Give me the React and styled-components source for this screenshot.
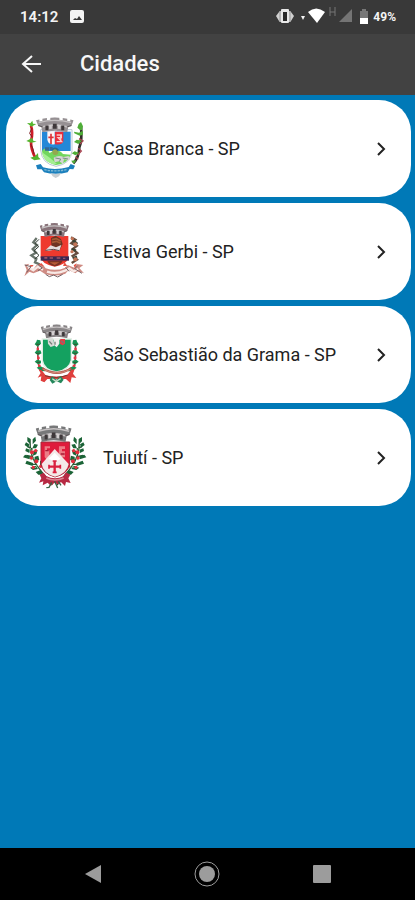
import React from "react";
import styled, { createGlobalStyle } from "styled-components";

const GlobalStyle = createGlobalStyle`
  *, *::before, *::after { box-sizing: border-box; }
  body {
    margin: 0;
    background: #0079b7;
    font-family: Roboto, "Liberation Sans", sans-serif;
  }
`;

const Screen = styled.div`
  display: flex;
  flex-direction: column;
  min-height: 100vh;
  background: #0079b7;
`;

const StatusBar = styled.div`
  display: flex;
  align-items: center;
  justify-content: space-between;
  height: 34px;
  padding: 0 19px 0 20px;
  background: #393939;
  color: #f4f4f4;
`;

const StatusGroup = styled.div`
  display: flex;
  align-items: center;
  gap: ${(p) => p.$gap}px;
`;

const Clock = styled.time`
  font-size: 15px;
  line-height: 20px;
  font-weight: 600;
`;

const BatteryLevel = styled.span`
  font-size: 12px;
  line-height: 20px;
  font-weight: 700;
`;

const AppBar = styled.header`
  display: flex;
  align-items: center;
  gap: 36px;
  height: 61px;
  padding: 0 18px 2px;
  background: #424242;
  color: #f7f7f7;
`;

const IconButton = styled.button`
  display: flex;
  padding: 0;
  border: 0;
  background: none;
  color: inherit;
  cursor: pointer;
`;

const Title = styled.h1`
  margin: 0;
  font-size: 22px;
  line-height: 28px;
  font-weight: 500;
`;

const CityList = styled.ul`
  flex: 1;
  display: flex;
  flex-direction: column;
  gap: 6px;
  margin: 0;
  padding: 5px 4px 5px 6px;
  list-style: none;
`;

const CityCard = styled.button`
  display: flex;
  align-items: center;
  gap: 8px;
  width: 100%;
  min-height: 97px;
  padding: 8px 17px 8px 9px;
  border: 0;
  border-radius: 32px;
  background: #fff;
  color: #222;
  font: inherit;
  text-align: left;
  cursor: pointer;
`;

const CityName = styled.span`
  flex: 1;
  font-size: 18px;
  line-height: 24px;
`;

const CrestArt = styled.svg`
  flex: none;
  width: 80px;
  height: 80px;
`;

const NavBar = styled.nav`
  display: grid;
  grid-template-columns: repeat(3, 1fr);
  justify-items: center;
  align-items: center;
  height: 52px;
  padding: 0 36px;
  background: #000;
  color: #9c9c9c;
`;

function MuralCrown({ x, y, width, height, color = "#8c8789" }) {
  return (
    <svg x={x} y={y} width={width} height={height} viewBox="0 0 100 42" preserveAspectRatio="none">
      <path
        d="M0 8 9 6V12L17 10V4L29 2V8L38 7V1L50 0 62 1V7L71 8V2L83 4V10L91 12V6L100 8 94 24 86 26 83 42Q50 33 17 42L14 26 6 24Z"
        fill={color}
      />
      <path d="M7 15Q50 2 93 15M15 27Q50 16 85 27" fill="none" stroke="#c5c1c2" strokeWidth="4" />
      <path d="M25 23h8v13h-8zM45 18h10v14H45zM67 23h8v13h-8z" fill="#3e383a" />
      <path d="M35 22l7-2v12l-7 1zM58 20l7 2v11l-7-1z" fill="#d4d0d1" />
      <path d="M6 23 18 27M94 23 82 27" stroke="#5b5557" strokeWidth="3" />
    </svg>
  );
}

function CasaBrancaCrest() {
  return (
    <CrestArt viewBox="0 0 240 240" aria-hidden="true">
      <path d="M48 50Q55 72 48 96 47 122 63 150" fill="none" stroke="#cf1c27" strokeWidth="8" />
      <path d="M50 58 44 73 51 84M47 105 54 120 57 135" fill="none" stroke="#7b2025" strokeWidth="3" />
      <path d="M49 53 36 42 46 43 52 35 54 44 64 45ZM48 101 34 96 44 91 51 86 55 95 65 98ZM58 154 46 146 60 142 69 132 70 144 77 151Z" fill="#55b52f" />
      <path d="M198 52Q202 94 193 115 192 145 175 163" fill="none" stroke="#302d28" strokeWidth="8" />
      <path d="M192 89l12 7-9 9M190 118l9 8-11 12M181 143l9 8" fill="none" stroke="#a84754" strokeWidth="4" />
      <path d="M196 64 187 56 191 45 198 39 204 52 201 63ZM194 80 178 73 177 68 192 71 203 65 204 77ZM190 105 177 99 185 92 201 95ZM181 139 170 133 179 127 193 132ZM177 164 168 155 184 154Z" fill="#4fae38" />
      <path d="M77 62H171V125Q168 165 123 172 80 164 77 123Z" fill="#fff" stroke="#b8c7d5" strokeWidth="3" />
      <path d="M81 68H167V126H81Z" fill="#2388d8" />
      <path d="M81 126Q91 108 104 132 126 114 144 135L167 137Q158 164 123 168 84 160 81 126Z" fill="#72d65e" />
      <path d="M81 130Q103 144 126 165L112 165Q84 155 81 130Z" fill="#a5ee92" />
      <path d="M90 115H102V125H90ZM104 114h9v10h-9z" fill="#356894" />
      <circle cx="121" cy="129" r="9" fill="#92a850" />
      <path d="M111 123Q120 113 130 124" fill="none" stroke="#2b668a" strokeWidth="5" />
      <path d="M97 67H119V106Q98 109 97 91Z" fill="#fff4f4" />
      <path d="M108 74v31M100 85h16" stroke="#dc3339" strokeWidth="5" />
      <path d="M120 68H145V97Q141 109 120 106Z" fill="#e82d3b" />
      <path d="M125 78h14v8h-10l11 12h-15M137 78v16" fill="none" stroke="#ffc8c6" strokeWidth="4" />
      <path d="M116 146Q130 137 146 144L161 141 165 154 147 151 144 164 132 157 119 160Z" fill="#d4d5d3" />
      <path d="M121 147 137 150 133 158M143 147 159 150" fill="none" stroke="#7b8c87" strokeWidth="3" />
      <MuralCrown x={63} y={25} width={113} height={45} color="#969093" />
      <path d="M63 169 77 165 84 175Q121 185 161 174L167 165 180 170 175 181 164 180 158 190Q122 199 87 190L80 181 67 181Z" fill="#1c80bd" />
      <path d="M88 182Q122 190 157 181" fill="none" stroke="#81b9d4" strokeWidth="4" strokeDasharray="7 3" />
      <path d="M107 193Q122 197 138 193L132 202 122 207 113 202Z" fill="#c8ced2" />
    </CrestArt>
  );
}

function EstivaGerbiCrest() {
  return (
    <CrestArt viewBox="0 0 240 240" aria-hidden="true">
      <g fill="none" strokeWidth="7">
        <path d="M65 78 55 91 66 99 53 111 63 122 49 130 64 141 60 151 74 157" stroke="#69746b" />
        <path d="M72 82 60 94 71 104 57 116 72 130 59 142" stroke="#343e35" strokeWidth="3" />
        <path d="M168 76 181 83 169 94 185 102 173 111 187 123 173 132 186 143 170 153" stroke="#674d3e" />
        <path d="M173 84 187 96M170 111 183 116M173 139 186 134" stroke="#374334" />
      </g>
      <g fill="#c37557">
        <circle cx="172" cy="80" r="5" /><circle cx="181" cy="97" r="6" /><circle cx="171" cy="119" r="5" /><circle cx="181" cy="142" r="6" />
      </g>
      <path d="M77 72H160V137Q156 157 119 164 80 157 77 136Z" fill="#ee392e" />
      <path d="M108 78 122 71 138 81 143 96 134 115 110 111Z" fill="#6e3323" />
      <path d="M111 83 124 80 137 87M111 91 124 88 137 94" fill="none" stroke="#a55b35" strokeWidth="5" />
      <path d="M91 115 107 100 123 106 139 99 133 116 116 113 101 117Z" fill="#e4dddd" />
      <path d="M91 115 116 112 133 116" fill="none" stroke="#5d494b" strokeWidth="3" />
      <path d="M77 133H162V146H77Z" fill="#392852" />
      <path d="M88 135h9v5h-9m16-4h10v4h-10m21-4h11v4h-11m19-3h7v4h-7" fill="#9a546b" />
      <path d="M97 147H143Q135 162 119 163 101 160 97 147Z" fill="#7b3425" />
      <path d="M104 151 133 151 119 159Z" fill="#b95b36" />
      <MuralCrown x={74} y={33} width={88} height={42} color="#89747a" />
      <path d="M29 158 43 155 35 164 55 172 64 160 84 158 92 169Q122 179 151 167L158 159 178 167 185 156 205 159 193 168 207 184 189 178 181 184 161 174 151 185Q122 196 90 186L75 176 55 184 43 179 28 193 35 174Z" fill="#cf8b83" />
      <path d="M40 166 55 175 69 164 84 173M96 179Q123 188 150 176L163 169 176 178 190 171" fill="none" stroke="#f7e9e5" strokeWidth="7" />
      <path d="M29 159 48 164 35 181M70 159 82 168 69 176M152 166 162 178M188 161 179 170 201 184M92 187 103 194 116 189 128 195 143 187" fill="none" stroke="#776366" strokeWidth="3" />
      <path d="M43 159 56 159 51 165M69 157 80 154 86 163M149 151 157 162 144 162M176 160 185 154 180 168" fill="#e45143" />
    </CrestArt>
  );
}

function SaoSebastiaoCrest() {
  return (
    <CrestArt viewBox="0 0 240 240" aria-hidden="true">
      <g id="grama-branch">
        <path d="M69 79Q67 113 70 138 70 160 84 178" fill="none" stroke="#b33443" strokeWidth="5" />
        <path d="M68 95 59 88 64 80 66 74 76 76 78 86ZM69 121 59 113 65 106 76 106 80 115ZM69 148 59 140 66 134 78 137 78 145ZM78 168 65 158 75 153 87 159 91 169Z" fill="#159453" />
        <path d="M64 88h10m-10 27h10m-9 27h10" stroke="#345b35" strokeWidth="4" />
        <path d="M65 99h7v7h-7zM66 125h8v7h-8zM69 149h8v6h-8z" fill="#e43845" />
      </g>
      <use href="#grama-branch" transform="matrix(-1 0 0 1 250 0)" />
      <path d="M82 72H169V135Q164 163 125 171 86 165 82 136Z" fill="#14a160" stroke="#e0eee4" strokeWidth="4" />
      <path d="M98 70H114L118 92 107 96 99 86Z" fill="#d8d9d6" />
      <path d="M116 70H133V86L125 97 116 89Z" fill="#f0efec" />
      <path d="M136 72H150V86L143 91 135 87Z" fill="#e63c45" />
      <path d="M103 79 111 88M120 80v9M139 78l8 7" stroke="#747b75" strokeWidth="4" />
      <MuralCrown x={77} y={28} width={96} height={42} color="#888486" />
      <path d="M82 160Q125 187 169 160" fill="none" stroke="#b6544b" strokeWidth="7" />
      <path d="M85 163Q125 184 166 163" fill="none" stroke="#e1ad93" strokeWidth="2" />
      <path d="M70 163 80 166 92 181Q124 189 156 181L168 165 179 162 174 176 184 189 170 187 166 204 153 192 97 192 88 202 77 197 79 184 68 188 77 174Z" fill="#df3f3d" />
      <path d="M90 182Q125 193 158 180" fill="none" stroke="#7a3027" strokeWidth="3" />
      <path d="M111 184 124 194 137 183 146 194 138 205 125 199 112 206 104 195Z" fill="#25875c" />
      <path d="M112 191l11 8 14-8" fill="none" stroke="#cee3ce" strokeWidth="4" />
    </CrestArt>
  );
}

function TuiutiCrest() {
  return (
    <CrestArt viewBox="0 0 240 240" aria-hidden="true">
      <g id="tuiuti-branch">
        <path d="M45 63Q43 116 72 151L112 201M37 85 53 94M34 112 52 116M44 139 64 139" fill="none" stroke="#295834" strokeWidth="4" />
        <path d="M45 77 37 70 37 57 46 62ZM53 79 53 64 61 56 63 68ZM40 89 29 81 33 73 43 79ZM52 91 58 78 69 80 63 91ZM43 105 31 99 33 91 45 95ZM54 113 55 98 68 96 64 109ZM44 124 24 118 30 110 45 115ZM58 133 59 116 70 113 73 126ZM53 144 31 137 35 128 54 135ZM69 153 54 156 45 149 62 143ZM75 143 75 129 85 125 88 139ZM85 170 70 170 62 162 77 156Z" fill="#1b6437" />
        <path d="M47 90 44 99M57 119 49 127M68 141 60 150" stroke="#84bb80" strokeWidth="3" />
        <g fill="#e52d3d"><circle cx="51" cy="103" r="6" /><circle cx="62" cy="98" r="5" /><circle cx="49" cy="120" r="5" /><circle cx="64" cy="130" r="6" /><circle cx="55" cy="148" r="5" /><circle cx="77" cy="145" r="5" /></g>
      </g>
      <use href="#tuiuti-branch" transform="matrix(-1 0 0 1 238 0)" />
      <path d="M78 72H164V138Q159 168 120 177 82 166 78 138Z" fill="#df1c3c" stroke="#a42b3a" strokeWidth="3" />
      <path d="M89 85h16v6H96v6h7v20l-8 8-6-8zM132 85h18v8h-9v7h9v18h-8l-3 8-8-9z" fill="#ed7c86" />
      <path d="M91 98h10M137 108h12" stroke="#a71935" strokeWidth="4" />
      <path d="M119 93 161 138Q156 167 120 176 84 166 80 138Z" fill="#f4e9e8" />
      <path d="M119 104 137 123 119 131 101 122Z" fill="#fff" />
      <path d="M119 129v34M102 146h34" stroke="#d91f3d" strokeWidth="7" />
      <path d="M113 129h12M113 163h12M102 140v12M136 140v12" stroke="#d91f3d" strokeWidth="5" />
      <MuralCrown x={62} y={22} width={108} height={50} color="#777879" />
      <path d="M74 170 86 164 94 174Q119 187 145 175L153 163 166 170 160 181 167 195 153 192 150 204 138 192 129 199 118 195 107 203 98 194 83 202 85 190 72 194 79 181Z" fill="#b72a43" />
      <path d="M94 180Q119 192 146 180" fill="none" stroke="#db8793" strokeWidth="5" />
      <path d="M110 193 102 208 94 209M119 190 128 210M130 190 138 202" fill="none" stroke="#376345" strokeWidth="4" />
    </CrestArt>
  );
}

const cities = [
  { name: "Casa Branca - SP", Crest: CasaBrancaCrest },
  { name: "Estiva Gerbi - SP", Crest: EstivaGerbiCrest },
  { name: "São Sebastião da Grama - SP", Crest: SaoSebastiaoCrest },
  { name: "Tuiutí - SP", Crest: TuiutiCrest },
];

function PictureIcon() {
  return (
    <svg width="14" height="14" viewBox="0 0 14 14" aria-hidden="true">
      <rect width="14" height="13" rx="2" fill="currentColor" />
      <path d="m3 10 2-2 2 1 2-3 3 4Z" fill="#393939" />
    </svg>
  );
}

function StatusIcons() {
  return (
    <svg width="94" height="22" viewBox="276 6 94 22" aria-hidden="true">
      <path d="M276 16l3-4v9zM294 16l-3-4v9z" fill="#d0d0d0" />
      <rect x="279" y="11" width="12" height="11" rx="1" fill="#b4b4b4" />
      <rect x="281" y="9" width="8" height="14" rx="1" fill="#e8e8e8" />
      <rect x="283" y="12" width="4" height="9" fill="#292929" />
      <path d="M301 16h4l-2 4z" fill="#f4f4f4" />
      <path d="M308 12Q316 5 325 12L317 23Z" fill="#fff" />
      <path d="M330 7v9M335 7v9M330 12h5" fill="none" stroke="#777" strokeWidth="1" />
      <path d="M339 22 352 9V22Z" fill="#747474" />
      <path d="M360 11h2V9h4v2h2v7h-8z" fill="#777" />
      <path d="M360 18h8v6h-8z" fill="#fff" />
    </svg>
  );
}

export default function App() {
  return (
    <Screen>
      <GlobalStyle />
      <StatusBar>
        <StatusGroup $gap={12}>
          <Clock>14:12</Clock>
          <PictureIcon />
        </StatusGroup>
        <StatusGroup $gap={3}>
          <StatusIcons />
          <BatteryLevel>49%</BatteryLevel>
        </StatusGroup>
      </StatusBar>
      <AppBar>
        <IconButton type="button" aria-label="Voltar">
          <svg width="26" height="26" viewBox="0 0 26 26" fill="none" stroke="currentColor" strokeWidth="2" aria-hidden="true">
            <path d="M23 13H5M14 5 5 13l9 8" />
          </svg>
        </IconButton>
        <Title>Cidades</Title>
      </AppBar>
      <CityList>
        {cities.map(({ name, Crest }) => (
          <li key={name}>
            <CityCard type="button">
              <Crest />
              <CityName>{name}</CityName>
              <svg width="24" height="24" viewBox="0 0 24 24" fill="none" stroke="currentColor" strokeWidth="2" aria-hidden="true">
                <path d="m8 6 6 6-6 6" />
              </svg>
            </CityCard>
          </li>
        ))}
      </CityList>
      <NavBar>
        <IconButton type="button" aria-label="Voltar à tela anterior">
          <svg width="18" height="20" viewBox="0 0 18 20" aria-hidden="true"><path d="M1 10 17 1v18Z" fill="currentColor" /></svg>
        </IconButton>
        <IconButton type="button" aria-label="Início">
          <svg width="26" height="26" viewBox="0 0 26 26" aria-hidden="true">
            <circle cx="13" cy="13" r="12" fill="none" stroke="currentColor" />
            <circle cx="13" cy="13" r="8" fill="currentColor" />
          </svg>
        </IconButton>
        <IconButton type="button" aria-label="Aplicativos recentes">
          <svg width="18" height="18" viewBox="0 0 18 18" aria-hidden="true"><rect width="18" height="18" rx="1" fill="currentColor" /></svg>
        </IconButton>
      </NavBar>
    </Screen>
  );
}
